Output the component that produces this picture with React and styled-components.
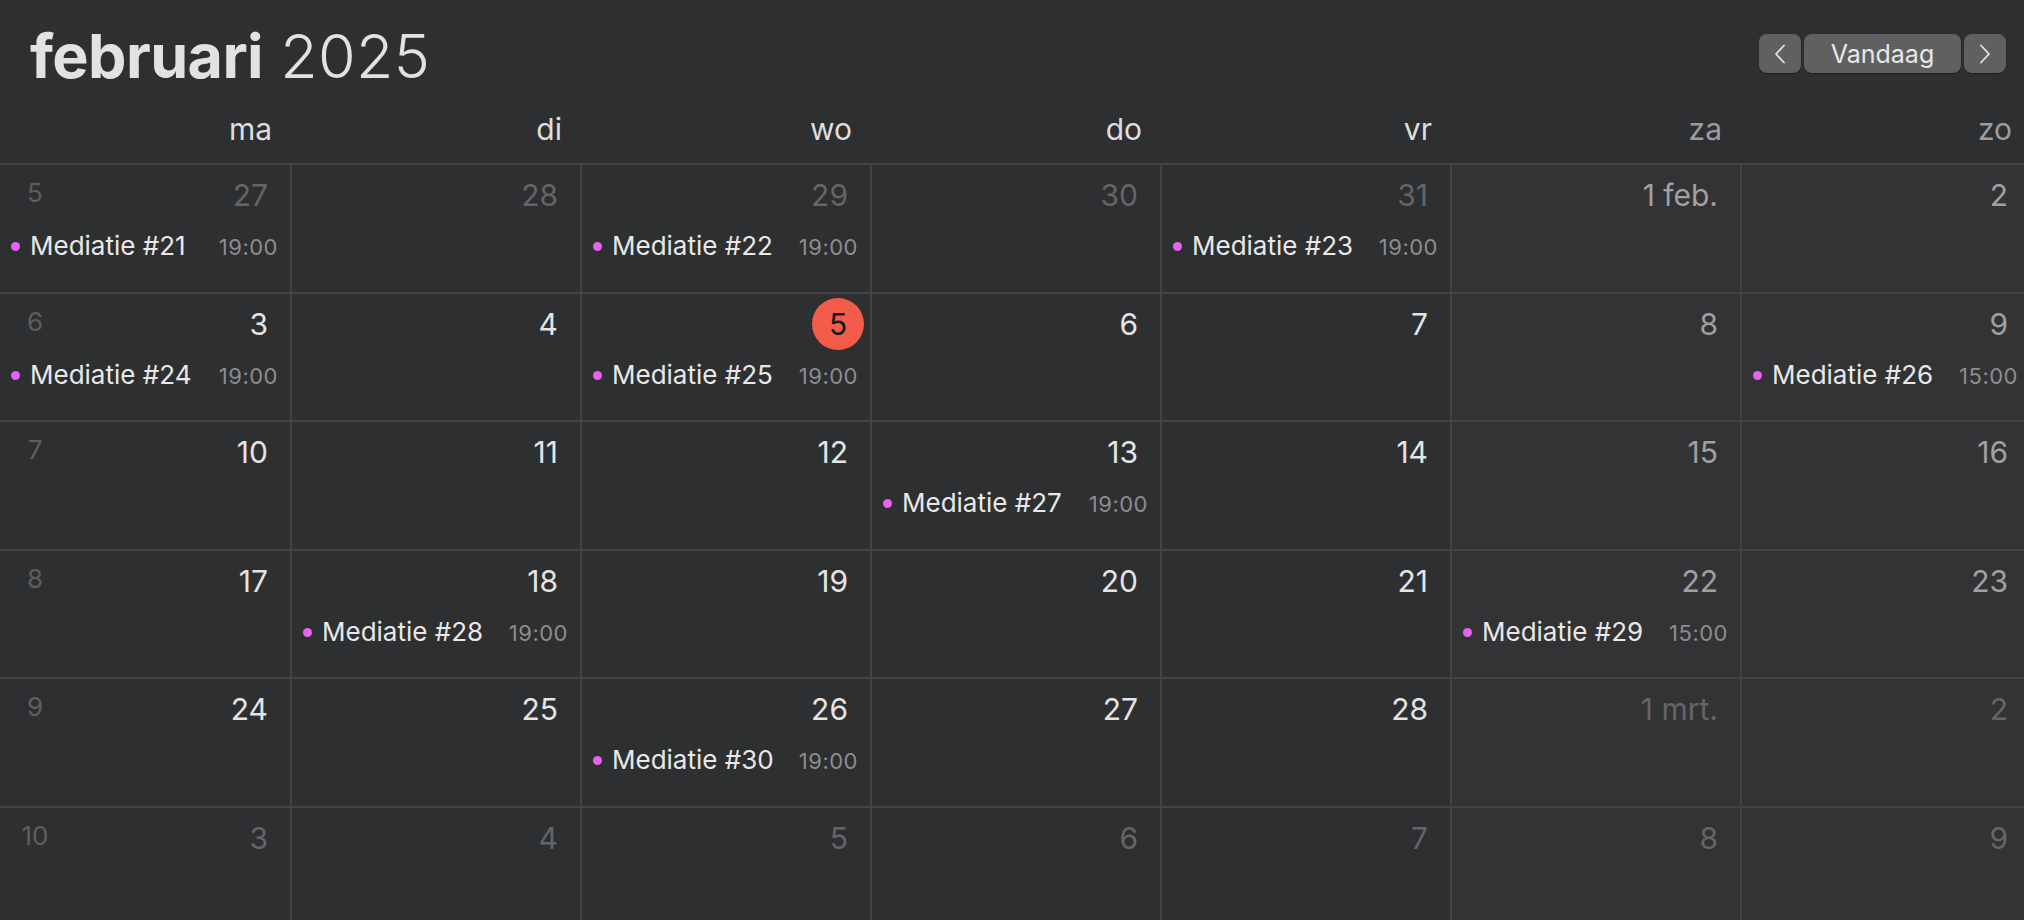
import React from 'react'
import styled, { createGlobalStyle } from 'styled-components'

const GlobalStyle = createGlobalStyle`
  html, body {
    margin: 0;
    padding: 0;
    background: #2e2f31;
    overflow: hidden;
  }
  body {
    font-family: Inter, "Noto Sans", "Liberation Sans", sans-serif;
    color: #e4e4e4;
  }
`

const weekdays = ['ma', 'di', 'wo', 'do', 'vr', 'za', 'zo']

const weeks = [
  {
    nr: 5,
    days: [
      { label: '27', out: true, event: ['Mediatie #21', '19:00'] },
      { label: '28', out: true },
      { label: '29', out: true, event: ['Mediatie #22', '19:00'] },
      { label: '30', out: true },
      { label: '31', out: true, event: ['Mediatie #23', '19:00'] },
      { label: '1 feb.' },
      { label: '2' },
    ],
  },
  {
    nr: 6,
    days: [
      { label: '3', event: ['Mediatie #24', '19:00'] },
      { label: '4' },
      { label: '5', today: true, event: ['Mediatie #25', '19:00'] },
      { label: '6' },
      { label: '7' },
      { label: '8' },
      { label: '9', event: ['Mediatie #26', '15:00'] },
    ],
  },
  {
    nr: 7,
    days: [
      { label: '10' },
      { label: '11' },
      { label: '12' },
      { label: '13', event: ['Mediatie #27', '19:00'] },
      { label: '14' },
      { label: '15' },
      { label: '16' },
    ],
  },
  {
    nr: 8,
    days: [
      { label: '17' },
      { label: '18', event: ['Mediatie #28', '19:00'] },
      { label: '19' },
      { label: '20' },
      { label: '21' },
      { label: '22', event: ['Mediatie #29', '15:00'] },
      { label: '23' },
    ],
  },
  {
    nr: 9,
    days: [
      { label: '24' },
      { label: '25' },
      { label: '26', event: ['Mediatie #30', '19:00'] },
      { label: '27' },
      { label: '28' },
      { label: '1 mrt.', out: true },
      { label: '2', out: true },
    ],
  },
  {
    nr: 10,
    days: [
      { label: '3', out: true },
      { label: '4', out: true },
      { label: '5', out: true },
      { label: '6', out: true },
      { label: '7', out: true },
      { label: '8', out: true },
      { label: '9', out: true },
    ],
  },
]

function Chevron({ dir }) {
  return (
    <svg width="12" height="20" viewBox="0 0 12 20" fill="none">
      <path
        d={dir === 'left' ? 'M10 1.5 L2 10 L10 18.5' : 'M2 1.5 L10 10 L2 18.5'}
        stroke="#e4e4e4"
        strokeWidth="1.8"
        strokeLinecap="round"
        strokeLinejoin="round"
      />
    </svg>
  )
}

function App() {
  return (
    <>
      <GlobalStyle />
      <Page>
        <TopBar>
          <Title>
            <Month>februari</Month> <Year>2025</Year>
          </Title>
          <Nav>
            <NavButton aria-label="vorige">
              <Chevron dir="left" />
            </NavButton>
            <TodayButton>Vandaag</TodayButton>
            <NavButton aria-label="volgende">
              <Chevron dir="right" />
            </NavButton>
          </Nav>
        </TopBar>

        <DayHeader>
          {weekdays.map((d, i) => (
            <DayName key={d} $weekend={i >= 5}>
              {d}
            </DayName>
          ))}
        </DayHeader>

        <Grid>
          {weeks.map((w) =>
            w.days.map((day, i) => (
              <Cell key={w.nr + '-' + i} $weekend={i >= 5}>
                <CellHead $first={i === 0}>
                  {i === 0 && <WeekNo>{w.nr}</WeekNo>}
                  {day.today ? (
                    <TodayNum>{day.label}</TodayNum>
                  ) : (
                    <DayNum $tone={day.out ? 'out' : i >= 5 ? 'weekend' : 'in'}>
                      {day.label}
                    </DayNum>
                  )}
                </CellHead>
                {day.event && (
                  <Event>
                    <Dot />
                    <EventTitle>{day.event[0]}</EventTitle>
                    <EventTime>{day.event[1]}</EventTime>
                  </Event>
                )}
              </Cell>
            ))
          )}
        </Grid>
      </Page>
    </>
  )
}

const Page = styled.div`
  width: 2032px;
  height: 920px;
  overflow: hidden;
`

const TopBar = styled.div`
  width: 2024px;
  height: 92px;
  box-sizing: border-box;
  padding: 20px 18px 0 30px;
  display: flex;
  justify-content: space-between;
  align-items: flex-start;
`

const Title = styled.h1`
  margin: 0;
  font-size: 61px;
  line-height: 72px;
  color: #e2e2e2;
  font-weight: normal;
`

const Month = styled.span`
  font-weight: 700;
  letter-spacing: -0.6px;
`

const Year = styled.span`
  font-weight: 300;
  letter-spacing: 0.3px;
`

const Nav = styled.div`
  margin-top: 14px;
  display: flex;
  gap: 3px;
`

const NavButton = styled.button`
  width: 42px;
  height: 39px;
  border: none;
  border-radius: 8px;
  background: #606063;
  box-shadow: 0 1px 1px rgba(0, 0, 0, 0.35);
  display: flex;
  align-items: center;
  justify-content: center;
  padding: 0;
`

const TodayButton = styled.button`
  width: 157px;
  height: 39px;
  border: none;
  border-radius: 8px;
  background: #606063;
  box-shadow: 0 1px 1px rgba(0, 0, 0, 0.35);
  color: #e8e8e8;
  font-family: Inter, "Noto Sans", sans-serif;
  font-size: 25px;
  font-weight: 400;
  padding: 0;
`

const columns = 'grid-template-columns: 290px repeat(6, 288px);'

const DayHeader = styled.div`
  display: grid;
  ${columns}
  column-gap: 2px;
  height: 71px;
  box-sizing: border-box;
  padding-top: 19px;
`

const DayName = styled.div`
  text-align: right;
  padding-right: 18px;
  font-size: 30px;
  line-height: 36px;
  color: ${(p) => (p.$weekend ? '#9c9c9e' : '#dedede')};
`

const Grid = styled.div`
  display: grid;
  ${columns}
  grid-auto-rows: 126.5px;
  gap: 2px;
  padding-top: 2px;
  background: #434345;
`

const Cell = styled.div`
  background: ${(p) => (p.$weekend ? '#333335' : '#2e2f31')};
  display: flex;
  flex-direction: column;
  padding-top: 12px;
  box-sizing: border-box;
`

const CellHead = styled.div`
  display: flex;
  justify-content: ${(p) => (p.$first ? 'space-between' : 'flex-end')};
  align-items: flex-start;
  padding: 0 22px 0 0;
  height: 36px;
`

const WeekNo = styled.span`
  width: 40px;
  margin-left: 15px;
  text-align: center;
  font-size: 26px;
  line-height: 32px;
  color: #5e5e60;
`

const toneColor = {
  in: '#e4e4e4',
  weekend: '#a0a0a2',
  out: '#656567',
}

const DayNum = styled.span`
  font-size: 30px;
  line-height: 36px;
  color: ${(p) => toneColor[p.$tone]};
  white-space: nowrap;
`

const TodayNum = styled.span`
  width: 52px;
  height: 52px;
  margin: -8px -16px -8px 0;
  border-radius: 50%;
  background: #f35b4a;
  color: #141414;
  font-size: 30px;
  display: flex;
  align-items: center;
  justify-content: center;
`

const Event = styled.div`
  margin-top: 18px;
  display: flex;
  align-items: baseline;
  padding: 0 12px 0 11px;
  line-height: 30px;
`

const Dot = styled.span`
  align-self: center;
  width: 9px;
  height: 9px;
  border-radius: 50%;
  background: #e862f0;
  margin-right: 10px;
  flex-shrink: 0;
`

const EventTitle = styled.span`
  font-size: 26px;
  color: #e8e8e8;
  white-space: nowrap;
`

const EventTime = styled.span`
  margin-left: auto;
  font-size: 22px;
  color: #8d8d8f;
  letter-spacing: 0.5px;
`

export default App
